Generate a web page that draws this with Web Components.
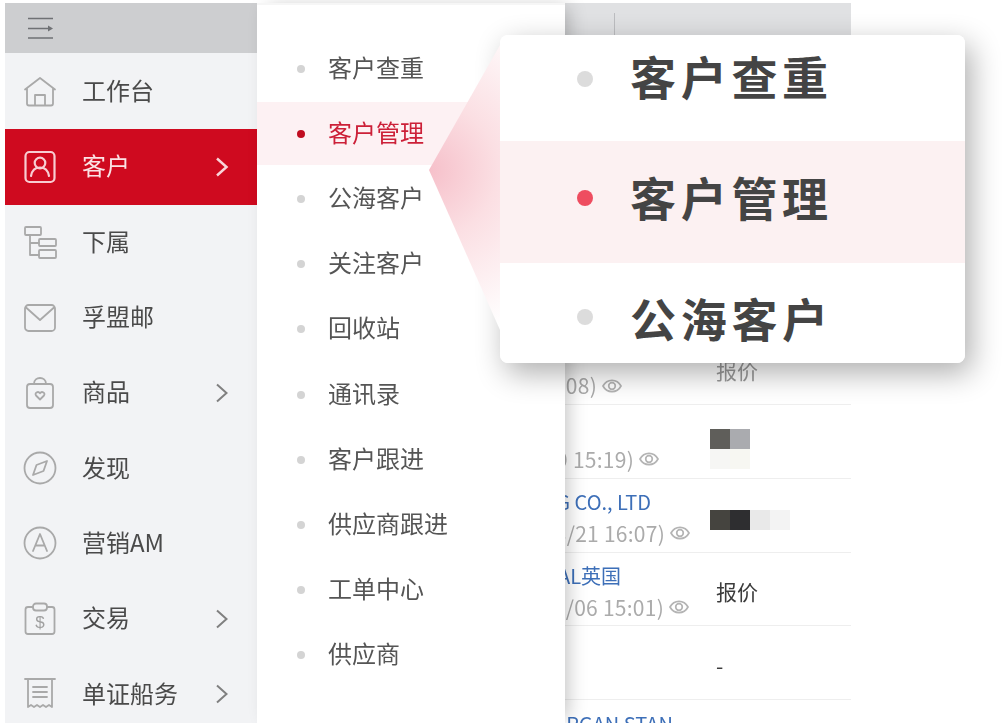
<!DOCTYPE html>
<html lang="zh-CN">
<head>
<meta charset="utf-8">
<title>客户管理</title>
<style>
html,body{margin:0;padding:0;background:#fff;height:723px;overflow:hidden;font-family:"Noto Sans CJK SC","Liberation Sans",sans-serif}
svg.i{display:block;width:36px;height:36px;fill:none;stroke:#a9a9a9;stroke-width:1.8;stroke-linecap:round;stroke-linejoin:round}
svg.i text{font:400 17px "Liberation Sans",sans-serif;fill:#a0a0a0;stroke:none;text-anchor:middle}
</style>
</head>
<body>
<crm-app>
  <side-nav slot="nav">
    <nav-item label="工作台"><svg class="i" slot="icon" viewBox="0 0 36 36"><path d="M3 15.500 18 4l15 11.500M5 14v15.500a2 2 0 0 0 2 2h22a2 2 0 0 0 2-2V14"/><path d="M13 31V21h10v10"/></svg></nav-item>
    <nav-item label="客户" arrow active><svg class="i" slot="icon" viewBox="0 0 36 36" style="stroke:#f8cdd2;stroke-width:2.200"><rect x="3.500" y="3" width="29" height="30" rx="4"/><circle cx="18" cy="14" r="5.300"/><path d="M9 27c1-6 4.500-8.500 9-8.500s8 2.500 9 8.500"/></svg></nav-item>
    <nav-item label="下属"><svg class="i" slot="icon" viewBox="0 0 36 36"><rect x="3" y="3" width="16" height="8" rx="1"/><path d="M8 11v20h9M8 19h9"/><rect x="17" y="15" width="17" height="7" rx="1"/><rect x="17" y="26" width="17" height="8" rx="1"/></svg></nav-item>
    <nav-item label="孚盟邮"><svg class="i" slot="icon" viewBox="0 0 36 36"><rect x="3" y="5" width="30" height="26" rx="3.500"/><path d="M4 7.500 18 20 32 7.500"/></svg></nav-item>
    <nav-item label="商品" arrow><svg class="i" slot="icon" viewBox="0 0 36 36"><rect x="5" y="9" width="26" height="24" rx="3"/><path d="M12 9c0-8 12-8 12 0"/><path d="M18 24.500l-4-4c-1.800-2.200 2-5 4-2.200 2-2.800 5.800 0 4 2.200z"/></svg></nav-item>
    <nav-item label="发现"><svg class="i" slot="icon" viewBox="0 0 36 36"><circle cx="18" cy="18" r="15.500"/><path d="M25 11l-3.500 10L11 25l3.500-10z"/></svg></nav-item>
    <nav-item label="营销AM"><svg class="i" slot="icon" viewBox="0 0 36 36"><circle cx="18" cy="18" r="15.500"/><path d="M11 26 18 9l7 17M13.500 20.500h9"/></svg></nav-item>
    <nav-item label="交易" arrow><svg class="i" slot="icon" viewBox="0 0 36 36"><path d="M11 6H6a2.500 2.500 0 0 0-2.500 2.500v22A2.500 2.500 0 0 0 6 33h24a2.500 2.500 0 0 0 2.500-2.500v-22A2.500 2.500 0 0 0 30 6h-5"/><rect x="11" y="2.500" width="14" height="7" rx="3"/><text x="18" y="27">$</text></svg></nav-item>
    <nav-item label="单证船务" arrow><svg class="i" slot="icon" viewBox="0 0 36 36"><path d="M3 3h30M6 3v28l3-2 3 2 3-2 3 2 3-2 3 2 3-2 3 2V3"/><path d="M11 11h14M11 16h14M11 21h14"/></svg></nav-item>
  </side-nav>

  <sub-menu slot="sub">
    <sub-item>客户查重</sub-item>
    <sub-item active>客户管理</sub-item>
    <sub-item>公海客户</sub-item>
    <sub-item>关注客户</sub-item>
    <sub-item>回收站</sub-item>
    <sub-item>通讯录</sub-item>
    <sub-item>客户跟进</sub-item>
    <sub-item>供应商跟进</sub-item>
    <sub-item>工单中心</sub-item>
    <sub-item>供应商</sub-item>
  </sub-menu>

  <data-table slot="main">
    <data-row></data-row>
    <data-row></data-row>
    <data-row></data-row>
    <data-row></data-row>
    <data-row line2=":08)" end2="88" value="报价" faded></data-row>
    <data-row line2="9 15:19)" end2="51" blocks="5f5e5a,aaabaf|f6f6f4,f7f7f2" top="24"></data-row>
    <data-row line1="G CO., LTD" end1="59" line2="3/21 16:07)" end2="20" blocks="45443f,2e2e30,e9e9e9,f3f3f3" top="31"></data-row>
    <data-row line1="AL英国" end1="89" line2="1/06 15:01)" end2="21" value="报价"></data-row>
    <data-row value="-"></data-row>
    <data-row line1="RGAN STAN" end1="37"></data-row>
  </data-table>

  <zoom-callout slot="overlay">
    <zoom-row first>客户查重</zoom-row>
    <zoom-row active>客户管理</zoom-row>
    <zoom-row last>公海客户</zoom-row>
  </zoom-callout>
</crm-app>

<script>
function el(name, html){
  customElements.define(name, class extends HTMLElement{
    constructor(){
      super();
      this.attachShadow({mode:'open'}).innerHTML = typeof html==='function' ? '' : html;
    }
    connectedCallback(){
      if(typeof html==='function') this.shadowRoot.innerHTML = html(this);
    }
  });
}

el('crm-app', `<style>
:host{display:block;position:relative;width:1003px;height:723px;overflow:hidden;background:#fff}
.frame{display:flex;height:720px;padding:3px 0 0 5px}
</style>
<div class="frame"><slot name="nav"></slot><slot name="sub"></slot><slot name="main"></slot></div>
<slot name="overlay"></slot>`);

el('side-nav', `<style>
:host{display:block;width:252px;flex:none;background:#f2f3f5;filter:blur(.45px)}
.top{height:50px;background:#cdced0;display:flex;align-items:center;padding-left:22px;margin-bottom:1px}
svg{width:28px;height:24px;fill:none;stroke:#6f7174;stroke-width:1.6}
</style>
<div class="top"><svg viewBox="0 0 28 24"><path d="M1 2.500h25M1 12.500h20M1 22h25"/><path d="M21 9.500l5 3-5 3z" fill="#6f7174" stroke="none"/></svg></div>
<slot></slot>`);

el('nav-item', h=>`<style>
:host{display:flex;align-items:center;height:75.3px;padding-left:17px;box-sizing:border-box;color:#4a4a4a;font-size:24px;line-height:1}
:host([active]){background:#cf0a1f;color:#fbe3e5}
.ic{width:36px;height:36px;flex:none}
.t{margin-left:24px;flex:1;white-space:nowrap;padding-bottom:3px}
svg.ar{width:14px;height:22px;margin-right:28px;fill:none;stroke:#808080;stroke-width:2}
:host([active]) svg.ar{stroke:#f9d5d9;stroke-width:2.500}
</style>
<div class="ic"><slot name="icon"></slot></div><span class="t">${h.getAttribute('label')}</span>
${h.hasAttribute('arrow')?'<svg class="ar" viewBox="0 0 14 22"><path d="M2 2.500 11.500 11 2 19.500"/></svg>':''}`);

el('sub-menu', `<style>
:host{display:block;width:308px;flex:none;background:#fff;box-sizing:border-box;padding-top:31px;position:relative;z-index:1;box-shadow:7px 0 18px -4px rgba(0,0,0,.24);border-top:2px solid #f6f6f6;filter:blur(.4px)}
</style><slot></slot>`);

el('sub-item', `<style>
:host{display:flex;align-items:center;height:65.2px;padding-left:40px;color:#555;font-size:24px;line-height:1;box-sizing:border-box}
:host([active]){background:linear-gradient(#fff 1px,#fdf1f3 1px,#fdf1f3 64px,#fff 64px);color:#cc2038}
i{width:8px;height:8px;border-radius:50%;background:#d4d4d4;flex:none;margin-right:23px}
:host([active]) i{background:#c00d20}
span{padding-bottom:4px}
</style><i></i><span><slot></slot></span>`);

el('data-table', `<style>
:host{display:block;width:286px;flex:none;height:720px;overflow:hidden;position:relative}
.head{height:33px;background:#e0e1e3;display:flex;padding-top:10px;box-sizing:border-box}
.head i{display:block;width:1px;background:#bcbdc0;margin-left:49px}
</style><div class="head"><i></i></div><slot></slot>`);

el('data-row', h=>{
  const a=n=>h.getAttribute(n);
  let val='';
  if(a('blocks')){
    val=`<div class="m" style="margin-top:${a('top')}px">`+a('blocks').split('|').map(r=>
      '<div class="mr">'+r.split(',').map(c=>`<b style="background:#${c}"></b>`).join('')+'</div>').join('')+'</div>';
  } else if(a('value')) val=`<div class="v">${a('value')}</div>`;
  const eye=`<svg viewBox="0 0 20 14"><path d="M1 7c4-7.500 14-7.500 18 0-4 7.500-14 7.500-18 0z"/><circle cx="10" cy="7" r="3.300"/></svg>`;
  return `<style>
:host{display:flex;height:73.8px;box-sizing:border-box;border-bottom:1.500px solid #eeeeee;font-size:21px;line-height:31px;filter:blur(.4px)}
.l{width:145px;flex:none;overflow:hidden;padding-top:8px;box-sizing:border-box;white-space:nowrap}
.ln{display:flex;justify-content:flex-end;align-items:center;height:31px;white-space:nowrap}
.a{color:#3d6fb8;font-size:20px;padding-bottom:1px;box-sizing:border-box}
.b{color:#ababab;font-size:21px;gap:5px;letter-spacing:.25px}
.b svg{width:20px;height:14px;flex:none;fill:none;stroke:#b4b4b4;stroke-width:1.700}
.r{flex:1;display:flex;align-items:center}
.v{padding:5px 0 0 6px;color:${h.hasAttribute('faded')?'#9a9a9a':'#3c3c3c'}}
.m{align-self:flex-start;display:flex;flex-direction:column}
.mr{display:flex}
b{display:block;width:20px;height:20px}
</style>
<div class="l">
<div class="ln a" style="padding-right:${a('end1')||0}px">${a('line1')||''}</div>
${a('line2')?`<div class="ln b" style="padding-right:${a('end2')}px">${a('line2')}${eye}</div>`:''}
</div>
<div class="r">${val}</div>`;
});

el('zoom-callout', `<style>
:host{display:block}
svg{position:absolute;left:425px;top:30px;width:80px;height:320px;z-index:2}
.box{position:absolute;left:500px;top:35px;width:465px;height:328px;background:#fff;border-radius:8px;overflow:hidden;z-index:3;display:flex;flex-direction:column}
.sh{position:absolute;left:500px;top:35px;width:465px;height:328px;border-radius:8px;z-index:2;box-shadow:6px 10px 30px rgba(0,0,0,.32)}
</style>
<div class="sh"></div>
<svg viewBox="425 30 80 320"><defs><radialGradient id="g" gradientUnits="userSpaceOnUse" cx="429" cy="170" r="170"><stop offset="0" stop-color="#f6c0ca"/><stop offset=".4" stop-color="#fbdfe3"/><stop offset="1" stop-color="#fff"/></radialGradient></defs><path d="M429 170 500 45V330z" fill="url(#g)"/></svg>
<div class="box"><slot></slot></div>`);

el('zoom-row', `<style>
:host{display:flex;align-items:center;height:122px;flex:none;box-sizing:border-box;padding-left:77px;color:#444;font:700 46px/1 "Noto Sans CJK SC",sans-serif;letter-spacing:4.700px}
:host([first]){height:106px;padding-bottom:18px}
:host([active]){background:#fcf1f2;padding-bottom:4px}
:host([last]){height:100px;padding-top:16px}
i{width:16px;height:16px;border-radius:50%;background:#dcdcdc;flex:none;margin-right:37px}
:host([active]) i{background:#ee4d60;margin-bottom:4px}
:host([last]) i{margin-bottom:8px}
span{padding-bottom:8px}
</style><i></i><span><slot></slot></span>`);
</script>
</body>
</html>
